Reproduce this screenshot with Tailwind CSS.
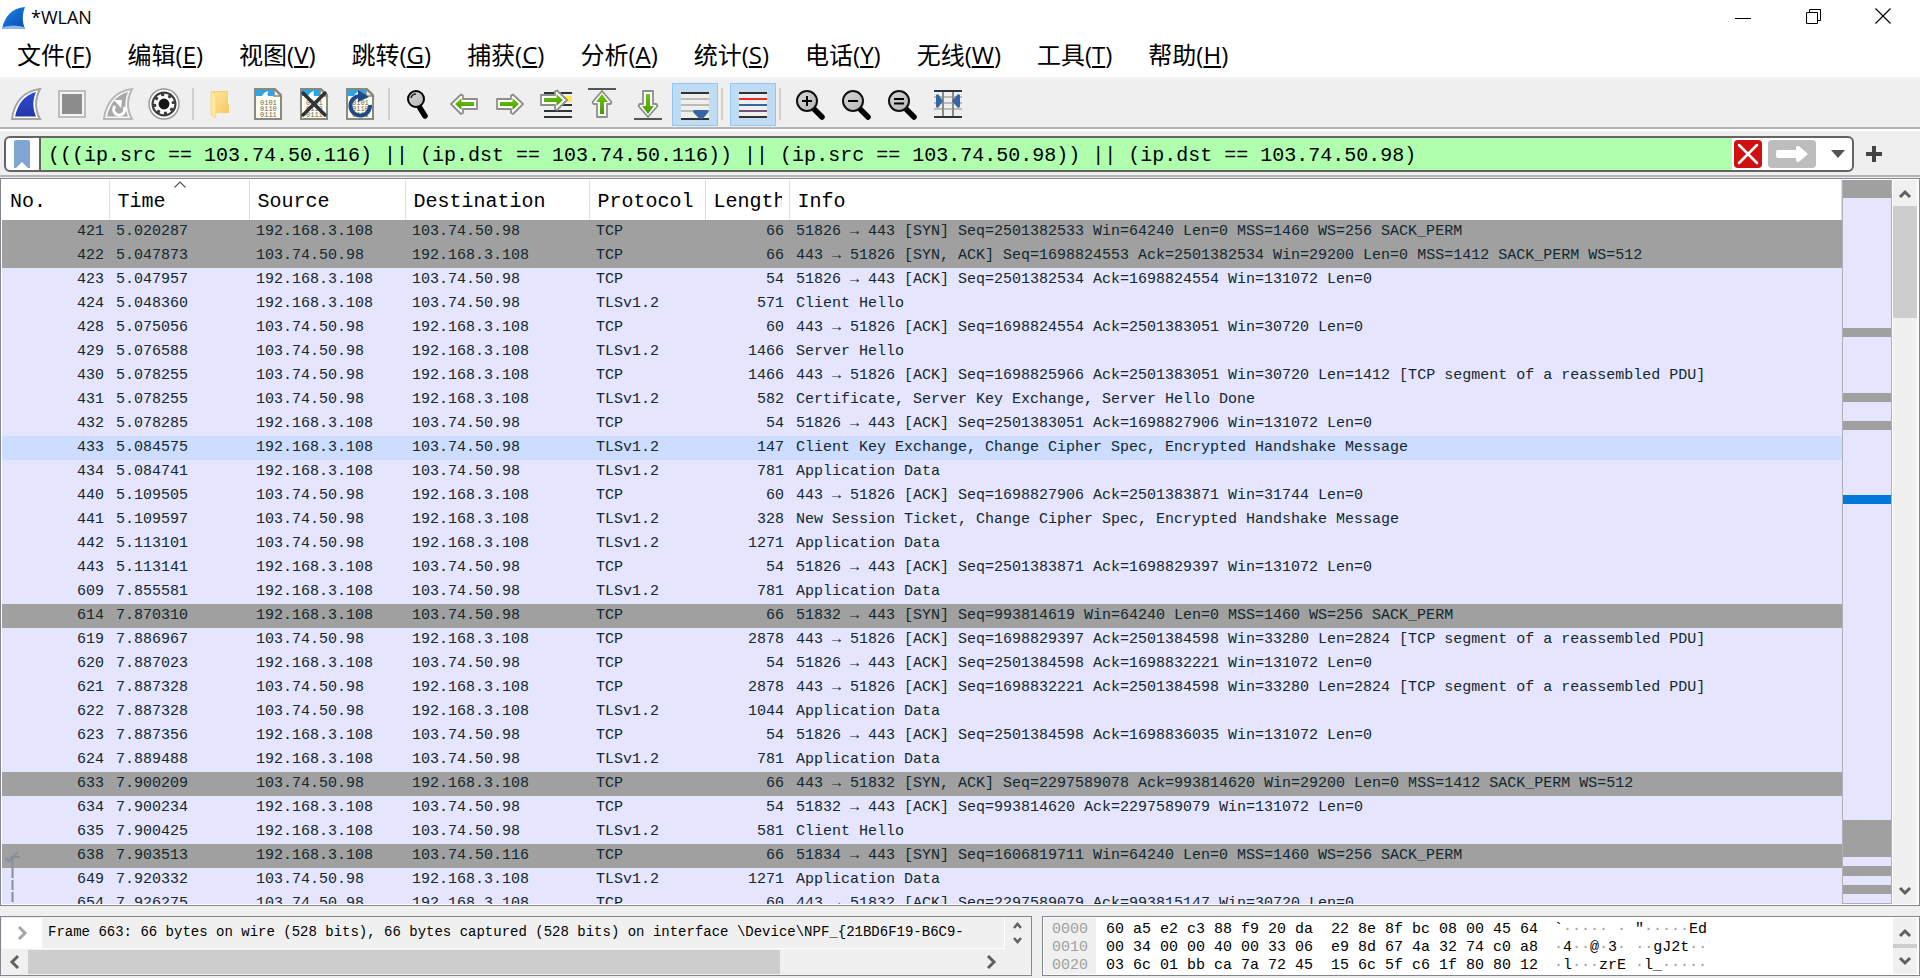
<!DOCTYPE html>
<html lang="zh-CN">
<head>
<meta charset="utf-8">
<title>*WLAN</title>
<script src="https://cdn.jsdelivr.net/npm/@tailwindcss/browser@4"></script>
</head>
<body class="flex h-screen flex-col overflow-hidden bg-[#efefef] font-['Open_Sans','Noto_Sans_CJK_SC',sans-serif] text-black">

<svg class="absolute h-0 w-0" aria-hidden="true">
  <defs>
    <linearGradient id="fin" x1="0" y1="0" x2="0" y2="1"><stop offset="0" stop-color="#2a4bd0"/><stop offset="1" stop-color="#2438a8"/></linearGradient>
    <linearGradient id="logo" x1="0" y1="0" x2="1" y2="1"><stop offset="0" stop-color="#1f8ae8"/><stop offset="1" stop-color="#0648b4"/></linearGradient>
    <linearGradient id="green" x1="0" y1="0" x2="0" y2="1"><stop offset="0" stop-color="#73c60f"/><stop offset="1" stop-color="#439a06"/></linearGradient>
    <linearGradient id="lens" x1="0" y1="0" x2="1" y2="1"><stop offset="0" stop-color="#d8d8d8"/><stop offset="1" stop-color="#b4b4b4"/></linearGradient>
    <linearGradient id="folder" x1="0" y1="0" x2="1" y2="1"><stop offset="0" stop-color="#ffe69a"/><stop offset="1" stop-color="#f2c860"/></linearGradient>
    <g id="doc">
      <path d="M3 1h20l6 6v24H3z" fill="#fffff2" stroke="#888a80" stroke-width="2"/>
      <path d="M4 2h18l6 6v0H4z" fill="#2ea5e2"/>
      <path d="M10 8q2-4 6-5q-1 3 0 5z" fill="#fff"/>
      <path d="M22 1v7h7z" fill="#f4f4ee" stroke="#888a80" stroke-width="1.5"/>
      <g font-family="Liberation Mono" font-size="7" fill="#66665f"><text x="8" y="17">0101</text><text x="8" y="23">0110</text><text x="8" y="29">0111</text></g>
    </g>
    <g id="glass">
      <path d="M20 21l8 8" stroke="#000" stroke-width="5.5" stroke-linecap="round"/>
      <circle cx="13" cy="13" r="10" fill="url(#lens)" stroke="#111" stroke-width="2"/>
    </g>
  </defs>
</svg>

<header class="flex h-[35px] shrink-0 items-center bg-white">
  <svg class="h-[35px] w-[28px]" viewBox="0 0 28 35"><path d="M2 29C5 16 12 8 25 7C22 14 22 22 25 29z" fill="url(#logo)"/><path d="M3 27Q14 24 24 27l1 2H2z" fill="#8db8e8"/></svg>
  <h1 class="pb-[2px] pl-[3px] text-[18px] leading-[32px]">*WLAN</h1>
  <div class="ml-auto flex pr-[2px]">
    <button class="flex h-[35px] w-[70px] items-center justify-center pb-[3px]" aria-label="最小化"><svg width="16" height="20" viewBox="0 0 16 20"><path d="M0 12.500h16" stroke="#000"/></svg></button>
    <button class="flex h-[35px] w-[70px] items-center justify-center pb-[3px]" aria-label="还原"><svg width="17" height="20" viewBox="0 0 17 20"><path d="M1.500 6.500h11v11h-11zM4.500 6.500v-3h11v11h-3" fill="none" stroke="#000"/></svg></button>
    <button class="flex h-[35px] w-[70px] items-center justify-center pb-[3px]" aria-label="关闭"><svg width="16" height="20" viewBox="0 0 16 20"><path d="M.5 2.500l15 15M15.500 2.500l-15 15" stroke="#000" stroke-width="1.200"/></svg></button>
  </div>
</header>

<nav class="flex h-[44px] shrink-0 items-center gap-[2px] border-b-2 border-[#f4f4f4] bg-white pb-[2px] text-[24px] leading-[40px] whitespace-nowrap">
  <button class="px-[17px]">文件(<u class="decoration-2 underline-offset-2">F</u>)</button>
  <button class="px-[17px]">编辑(<u class="decoration-2 underline-offset-2">E</u>)</button>
  <button class="px-[17px]">视图(<u class="decoration-2 underline-offset-2">V</u>)</button>
  <button class="px-[17px]">跳转(<u class="decoration-2 underline-offset-2">G</u>)</button>
  <button class="px-[17px]">捕获(<u class="decoration-2 underline-offset-2">C</u>)</button>
  <button class="px-[17px]">分析(<u class="decoration-2 underline-offset-2">A</u>)</button>
  <button class="px-[17px]">统计(<u class="decoration-2 underline-offset-2">S</u>)</button>
  <button class="px-[17px]">电话(<u class="decoration-2 underline-offset-2">Y</u>)</button>
  <button class="px-[17px]">无线(<u class="decoration-2 underline-offset-2">W</u>)</button>
  <button class="px-[17px]">工具(<u class="decoration-2 underline-offset-2">T</u>)</button>
  <button class="px-[17px]">帮助(<u class="decoration-2 underline-offset-2">H</u>)</button>
</nav>

<div role="toolbar" class="flex h-[50px] shrink-0 items-center border-b-2 border-[#b4b4b4] pt-[2px] pl-[3px]">
  <button class="flex h-[43px] w-[46px] items-center justify-center" aria-label="开始捕获"><svg width="32" height="32" viewBox="0 0 32 32"><path d="M2 31C4 14 14 3 30 1C25 11 25 22 30 31z" fill="#fff" stroke="#a5a5a5" stroke-width="2"/><path d="M5 28.500C8 15 15 7 26 4C22.500 12 22.500 20 26 28.500z" fill="url(#fin)"/></svg></button>
  <button class="flex h-[43px] w-[46px] items-center justify-center" aria-label="停止捕获"><svg width="32" height="32" viewBox="0 0 32 32"><path d="M3 3h26v26H3z" fill="#f4f4f4" stroke="#bdbdbd" stroke-width="2"/><path d="M6 6h20v20H6z" fill="#8c8c8c"/></svg></button>
  <button class="flex h-[43px] w-[46px] items-center justify-center" aria-label="重新捕获"><svg width="32" height="32" viewBox="0 0 32 32"><path d="M2 31C4 14 14 3 30 1C25 11 25 22 30 31z" fill="#f8f8f8" stroke="#b8b8b8" stroke-width="2"/><path d="M5 28.500C8 15 15 7 26 4C22.500 12 22.500 20 26 28.500z" fill="#a9a9a9"/><path d="M22 19a5.500 5.500 0 1 1-9 -1" fill="none" stroke="#fff" stroke-width="3"/><path d="M12 12h8l-1 8z" fill="#fff"/></svg></button>
  <button class="flex h-[43px] w-[46px] items-center justify-center" aria-label="捕获选项"><svg width="32" height="32" viewBox="0 0 32 32"><circle cx="16" cy="16" r="15" fill="#fff" stroke="#999" stroke-width="1.500"/><circle cx="16" cy="16" r="12.500" fill="#3a3d3f"/><circle cx="16" cy="16" r="8.800" fill="none" stroke="#fff" stroke-width="3" stroke-dasharray="4 2.900"/><circle cx="16" cy="16" r="6.700" fill="#151515" stroke="#fff" stroke-width="2.500"/></svg></button>
  <span class="flex w-[12px] justify-center"><span class="h-[32px] w-[2px] bg-[#cfcfcf]"></span></span>
  <button class="flex h-[43px] w-[46px] items-center justify-center" aria-label="打开"><svg width="32" height="32" viewBox="0 0 32 32"><path d="M7 3h15v13l1 1v8H7z" fill="#f5cf6c"/><path d="M9 4h12v12h2v9H9z" fill="url(#folder)"/><path d="M5 3l5 4v20l-1 3l-4-3z" fill="#ffe89c" stroke="#f2cc68" stroke-width=".6"/></svg></button>
  <button class="flex h-[43px] w-[46px] items-center justify-center" aria-label="保存"><svg width="32" height="32" viewBox="0 0 32 32"><use href="#doc"/></svg></button>
  <button class="flex h-[43px] w-[46px] items-center justify-center" aria-label="关闭文件"><svg width="32" height="32" viewBox="0 0 32 32"><use href="#doc"/><path d="M5 5l22 22M27 5L5 27" stroke="#2e3436" stroke-width="3.500" stroke-linecap="round"/></svg></button>
  <button class="flex h-[43px] w-[46px] items-center justify-center" aria-label="重新加载"><svg width="32" height="32" viewBox="0 0 32 32"><use href="#doc"/><path d="M26 17a9.800 9.800 0 1 1-9-9" fill="none" stroke="#204a87" stroke-width="4"/><path d="M14 2v12l11-5z" fill="#204a87"/></svg></button>
  <span class="flex w-[12px] justify-center"><span class="h-[32px] w-[2px] bg-[#cfcfcf]"></span></span>
  <button class="flex h-[43px] w-[46px] items-center justify-center" aria-label="查找"><svg width="32" height="32" viewBox="0 0 32 32"><path d="M18 20l5 8" stroke="#000" stroke-width="5.500" stroke-linecap="round"/><path d="M17 16l3 6" stroke="#000" stroke-width="2"/><circle cx="14" cy="11" r="8" fill="url(#lens)" stroke="#000" stroke-width="2"/><path d="M9 10q1-4 5-4" fill="none" stroke="#222" stroke-width="1.500"/></svg></button>
  <button class="flex h-[43px] w-[46px] items-center justify-center" aria-label="上一分组"><svg width="32" height="32" viewBox="0 0 32 32"><path d="M3 16L13 6.500l2 1V11h14v10H15v4l-2 1z" fill="#fff" stroke="#8d8f8a" stroke-width="1.800" stroke-linejoin="round"/><path d="M7 16l6.500-6v4H26v4H13.500v4z" fill="url(#green)"/></svg></button>
  <button class="flex h-[43px] w-[46px] items-center justify-center" aria-label="下一分组"><svg width="32" height="32" viewBox="0 0 32 32"><path d="M29 16L19 6.500l-2 1V11H3v10h14v4l2 1z" fill="#fff" stroke="#8d8f8a" stroke-width="1.800" stroke-linejoin="round"/><path d="M25 16l-6.500-6v4H6v4h12.500v4z" fill="url(#green)"/></svg></button>
  <button class="flex h-[43px] w-[46px] items-center justify-center" aria-label="转到分组"><svg width="32" height="32" viewBox="0 0 32 32"><path d="M4 5h28M4 23h28M4 29h28M4 17h28" stroke="#2e3436" stroke-width="2"/><path d="M22 8h10v6H22z" fill="#fce94f"/><path d="M27 12L17 2.500l-2 1V7H1v10h14v4l2 1z" fill="#fff" stroke="#8d8f8a" stroke-width="1.800" stroke-linejoin="round"/><path d="M23 12l-6.500-6v4H4v4h12.500v4z" fill="url(#green)"/></svg></button>
  <button class="flex h-[43px] w-[46px] items-center justify-center" aria-label="首个分组"><svg width="32" height="32" viewBox="0 0 32 32"><path d="M2 1h28" stroke="#555753" stroke-width="2"/><path d="M16 3l9.500 11l-1 2H21v13H11V16H7.500l-1-2z" fill="#fff" stroke="#8d8f8a" stroke-width="1.800" stroke-linejoin="round"/><path d="M16 6l6 8h-4v12h-4V14h-4z" fill="url(#green)"/></svg></button>
  <button class="flex h-[43px] w-[46px] items-center justify-center" aria-label="最后分组"><svg width="32" height="32" viewBox="0 0 32 32"><path d="M2 31h28" stroke="#555753" stroke-width="2"/><path d="M16 29l9.500-11l-1-2H21V3H11v13H7.500l-1 2z" fill="#fff" stroke="#8d8f8a" stroke-width="1.800" stroke-linejoin="round"/><path d="M16 26l6-8h-4V6h-4v12h-4z" fill="url(#green)"/></svg></button>
  <button class="ml-px flex h-[43px] w-[46px] items-center justify-center border border-[#90c8f6] bg-[#c0dcf3]" aria-label="自动滚动" aria-pressed="true"><svg width="32" height="32" viewBox="0 0 32 32"><path d="M2 5h28v26H2z" fill="#eeeeec"/><path d="M2 5h28M2 31h28" stroke="#2e3436" stroke-width="2"/><path d="M2 11h28M2 17h28M2 23h28" stroke="#babdb6" stroke-width="2"/><path d="M14 24q0-2 2-2h12q2 0 1.500 2l-5 6q-2.500 2-5 0z" fill="#3465a4"/></svg></button>
  <span class="flex w-[12px] pl-[3px]"><span class="h-[32px] w-[2px] bg-[#cfcfcf]"></span></span>
  <button class="flex h-[43px] w-[46px] items-center justify-center border border-[#90c8f6] bg-[#c0dcf3]" aria-label="着色" aria-pressed="true"><svg width="32" height="32" viewBox="0 0 32 32"><path d="M2 5h28v24H2z" fill="#eeeeec"/><path d="M2 5h28M2 29h28" stroke="#2e3436" stroke-width="2"/><path d="M2 11h28" stroke="#ef2929" stroke-width="2"/><path d="M2 17h28" stroke="#3465a4" stroke-width="2"/><path d="M2 23h28" stroke="#75507b" stroke-width="2"/></svg></button>
  <span class="flex w-[11px] pl-[3px]"><span class="h-[32px] w-[2px] bg-[#cfcfcf]"></span></span>
  <button class="flex h-[43px] w-[46px] items-center justify-center" aria-label="放大"><svg width="32" height="32" viewBox="0 0 32 32"><use href="#glass"/><path d="M8 13h10M13 8v10" stroke="#000" stroke-width="2"/></svg></button>
  <button class="flex h-[43px] w-[46px] items-center justify-center" aria-label="缩小"><svg width="32" height="32" viewBox="0 0 32 32"><use href="#glass"/><path d="M8 13h10" stroke="#000" stroke-width="2"/></svg></button>
  <button class="flex h-[43px] w-[46px] items-center justify-center" aria-label="原始大小"><svg width="32" height="32" viewBox="0 0 32 32"><use href="#glass"/><path d="M8 11h10M8 15.500h10" stroke="#000" stroke-width="2"/></svg></button>
  <button class="flex h-[43px] w-[46px] items-center justify-center" aria-label="调整列宽"><svg width="32" height="32" viewBox="0 0 32 32"><path d="M2 3h28v26H2z" fill="#eeeeec"/><path d="M2 9h28M2 15h28M2 21h28" stroke="#babdb6" stroke-width="2"/><path d="M2 3h28M2 29h28" stroke="#2e3436" stroke-width="2"/><path d="M11 4v24M21 4v24" stroke="#888a85" stroke-width="2"/><path d="M4 7l2-1l5 7l-5 7l-2-1zM28 7l-2-1l-6 7l6 7l2-1z" fill="#3465a4"/></svg></button>
</div>

<form class="flex h-[48px] shrink-0 items-center border-t-2 border-b-2 border-t-white border-b-[#b4b4b4] pt-px pl-[4px]">
  <div class="flex h-[36px] flex-1 items-center overflow-hidden rounded-[6px] border-2 border-[#646464] bg-white">
    <button type="button" class="flex h-full w-[35px] items-center justify-center border-r-2 border-[#646464] pr-px" aria-label="书签"><svg width="16" height="28" viewBox="0 0 16 28"><path d="M2 0h12q2 0 2 2v26h-2l-6-6l-6 6H0V2q0-2 2-2z" fill="#7ea5d4"/></svg></button>
    <input aria-label="显示过滤器" class="h-full min-w-0 flex-1 bg-[#afffaf] pt-[3px] pl-[7px] font-['Liberation_Mono',monospace] text-[20px] outline-none" value="(((ip.src == 103.74.50.116) || (ip.dst == 103.74.50.116)) || (ip.src == 103.74.50.98)) || (ip.dst == 103.74.50.98)">
    <button type="button" class="ml-[2px]" aria-label="清除"><svg width="28" height="28" viewBox="0 0 28 28"><rect width="28" height="28" rx="4" fill="#d01010"/><path d="M5 5l18 18M23 5L5 23" stroke="#fff" stroke-width="2.500" stroke-linecap="round"/></svg></button>
    <button type="button" class="ml-[6px]" aria-label="应用"><svg width="48" height="28" viewBox="0 0 48 28"><rect width="48" height="28" rx="4" fill="#bdbdbd"/><path d="M10 10h18V7q2-2 4 0l8 7l-8 7q-2 2-4 0v-3H10q-2 0-2-2v-4q0-2 2-2z" fill="#fff"/></svg></button>
    <button type="button" class="flex w-[36px] justify-center pl-[8px]" aria-label="历史"><svg width="14" height="8" viewBox="0 0 14 8"><path d="M0 0h14L7 8z" fill="#555"/></svg></button>
  </div>
  <button type="button" class="flex w-[66px] justify-start pl-[12px]" aria-label="添加"><svg width="16" height="16" viewBox="0 0 16 16"><path d="M8 0v16M0 8h16" stroke="#444" stroke-width="4"/></svg></button>
</form>

<main class="mt-px flex min-h-0 flex-1 border border-[#828790] bg-white p-px">
  <div class="min-w-0 flex-1 overflow-hidden">
    <table class="w-full table-fixed border-collapse font-['Liberation_Mono',monospace] text-[15px] text-[#12272e]">
      <colgroup><col class="w-[107px]"><col class="w-[140px]"><col class="w-[156px]"><col class="w-[184px]"><col class="w-[116px]"><col class="w-[84px]"><col></colgroup>
      <thead>
        <tr class="h-[40px] text-left text-[20px] text-black">
          <th class="border-r border-[#dedede] p-0 pt-[4px] pl-[8px] font-normal">No.</th>
          <th class="relative border-r border-[#dedede] p-0 pt-[4px] pl-[8px] font-normal">Time<svg class="absolute top-0 left-[64px]" width="12" height="8" viewBox="0 0 12 8"><path d="M.5 7.500L6 2l5.500 5.500" fill="none" stroke="#555" stroke-width="1.200"/></svg></th>
          <th class="border-r border-[#dedede] p-0 pt-[4px] pl-[8px] font-normal">Source</th>
          <th class="border-r border-[#dedede] p-0 pt-[4px] pl-[8px] font-normal">Destination</th>
          <th class="border-r border-[#dedede] p-0 pt-[4px] pl-[8px] font-normal">Protocol</th>
          <th class="border-r border-[#dedede] p-0 pt-[4px] pr-[7px] pl-[8px] font-normal"><div class="overflow-hidden">Length</div></th>
          <th class="border-r border-[#dedede] p-0 pt-[4px] pl-[8px] font-normal">Info</th>
        </tr>
      </thead>
      <tbody id="packets"></tbody>
    </table>
  </div>
  <div id="minimap" class="flex w-[50px] flex-col border-x border-b border-[#b0b0b4] bg-[#e5e5ff]"></div>
  <div class="mx-px flex w-[24px] flex-col items-center bg-[#f0f0f0]">
    <svg class="shrink-0" width="24" height="26" viewBox="0 0 24 26"><path d="M7 17l5-5l5 5" fill="none" stroke="#606060" stroke-width="3"/></svg>
    <div class="h-[112px] w-full bg-[#cdcdcd]"></div>
    <svg class="mt-auto shrink-0" width="24" height="26" viewBox="0 0 24 26"><path d="M7 10l5 5l5-5" fill="none" stroke="#606060" stroke-width="3"/></svg>
  </div>
</main>

<footer class="mt-[10px] mb-[2px] flex h-[60px] shrink-0 gap-[10px] font-['Liberation_Mono',monospace] text-[15px]">
  <section class="flex w-[1032px] shrink-0 flex-col border border-[#828790] bg-[#f0f0f0] p-px">
    <div class="flex h-[31px]">
      <div class="flex min-w-0 flex-1 border-r border-b border-white">
        <button class="flex w-[40px] items-center justify-center bg-white" aria-label="展开"><svg width="12" height="14" viewBox="0 0 12 14"><path d="M3 1l6 6l-6 6" fill="none" stroke="#a6a6a6" stroke-width="3"/></svg></button>
        <p class="min-w-0 flex-1 overflow-hidden pl-[6px] text-[14px] leading-[28px] whitespace-nowrap">Frame 663: 66 bytes on wire (528 bits), 66 bytes captured (528 bits) on interface \Device\NPF_{21BD6F19-B6C9-</p>
      </div>
      <svg width="25" height="31" viewBox="0 0 25 31"><path d="M9 10l3.500-4l3.500 4M9 20l3.500 4l3.500-4" fill="none" stroke="#606060" stroke-width="2.500"/></svg>
    </div>
    <div class="flex h-[25px] pt-px">
      <svg class="shrink-0" width="26" height="24" viewBox="0 0 26 24"><path d="M16 6l-6 6l6 6" fill="none" stroke="#606060" stroke-width="3"/></svg>
      <div class="h-full w-[752px] shrink-0 bg-[#cdcdcd]"></div>
      <svg class="mr-[25px] ml-auto" width="26" height="24" viewBox="0 0 26 24"><path d="M9 6l6 6l-6 6" fill="none" stroke="#606060" stroke-width="3"/></svg>
    </div>
  </section>
  <section class="flex min-w-0 flex-1 border border-[#828790] bg-white p-px leading-[18px]">
    <pre class="w-[52px] bg-[#f0f0f0] pt-[3px] pl-[8px] font-['Liberation_Mono',monospace] text-[#a0a0a0]">0000
0010
0020</pre>
    <pre class="w-[446px] pt-[3px] pl-[10px] font-['Liberation_Mono',monospace]">60 a5 e2 c3 88 f9 20 da  22 8e 8f bc 08 00 45 64
00 34 00 00 40 00 33 06  e9 8d 67 4a 32 74 c0 a8
03 6c 01 bb ca 7a 72 45  15 6c 5f c6 1f 80 80 12</pre>
    <pre class="pt-[3px] pl-[12px] font-['Liberation_Mono',monospace]">`<span class="text-[#a0a0a0]">·····</span> <span class="text-[#a0a0a0]">·</span> "<span class="text-[#a0a0a0]">·····</span>Ed
<span class="text-[#a0a0a0]">·</span>4<span class="text-[#a0a0a0]">··</span>@<span class="text-[#a0a0a0]">·</span>3<span class="text-[#a0a0a0]">·</span> <span class="text-[#a0a0a0]">··</span>gJ2t<span class="text-[#a0a0a0]">··</span>
<span class="text-[#a0a0a0]">·</span>l<span class="text-[#a0a0a0]">···</span>zrE <span class="text-[#a0a0a0]">·</span>l_<span class="text-[#a0a0a0]">·····</span></pre>
    <div class="mr-px ml-auto flex w-[24px] flex-col bg-[#f0f0f0]">
      <svg width="24" height="26" viewBox="0 0 24 26"><path d="M7 18l5-5l5 5" fill="none" stroke="#606060" stroke-width="3"/></svg>
      <div class="h-[4px] bg-[#cdcdcd]"></div>
      <svg width="24" height="26" viewBox="0 0 24 26"><path d="M7 10l5 5l5-5" fill="none" stroke="#606060" stroke-width="3"/></svg>
    </div>
  </section>
</footer>

<script>
const A = '192.168.3.108', B = '103.74.50.98';
// number, time, source, destination, protocol, length, info, row kind
const packets = [
  [421,'5.020287',A,B,'TCP',66,'51826 → 443 [SYN] Seq=2501382533 Win=64240 Len=0 MSS=1460 WS=256 SACK_PERM','syn'],
  [422,'5.047873',B,A,'TCP',66,'443 → 51826 [SYN, ACK] Seq=1698824553 Ack=2501382534 Win=29200 Len=0 MSS=1412 SACK_PERM WS=512','syn'],
  [423,'5.047957',A,B,'TCP',54,'51826 → 443 [ACK] Seq=2501382534 Ack=1698824554 Win=131072 Len=0'],
  [424,'5.048360',A,B,'TLSv1.2',571,'Client Hello'],
  [428,'5.075056',B,A,'TCP',60,'443 → 51826 [ACK] Seq=1698824554 Ack=2501383051 Win=30720 Len=0'],
  [429,'5.076588',B,A,'TLSv1.2',1466,'Server Hello'],
  [430,'5.078255',B,A,'TCP',1466,'443 → 51826 [ACK] Seq=1698825966 Ack=2501383051 Win=30720 Len=1412 [TCP segment of a reassembled PDU]'],
  [431,'5.078255',B,A,'TLSv1.2',582,'Certificate, Server Key Exchange, Server Hello Done'],
  [432,'5.078285',A,B,'TCP',54,'51826 → 443 [ACK] Seq=2501383051 Ack=1698827906 Win=131072 Len=0'],
  [433,'5.084575',A,B,'TLSv1.2',147,'Client Key Exchange, Change Cipher Spec, Encrypted Handshake Message','hover'],
  [434,'5.084741',A,B,'TLSv1.2',781,'Application Data'],
  [440,'5.109505',B,A,'TCP',60,'443 → 51826 [ACK] Seq=1698827906 Ack=2501383871 Win=31744 Len=0'],
  [441,'5.109597',B,A,'TLSv1.2',328,'New Session Ticket, Change Cipher Spec, Encrypted Handshake Message'],
  [442,'5.113101',B,A,'TLSv1.2',1271,'Application Data'],
  [443,'5.113141',A,B,'TCP',54,'51826 → 443 [ACK] Seq=2501383871 Ack=1698829397 Win=131072 Len=0'],
  [609,'7.855581',A,B,'TLSv1.2',781,'Application Data'],
  [614,'7.870310',A,B,'TCP',66,'51832 → 443 [SYN] Seq=993814619 Win=64240 Len=0 MSS=1460 WS=256 SACK_PERM','syn'],
  [619,'7.886967',B,A,'TCP',2878,'443 → 51826 [ACK] Seq=1698829397 Ack=2501384598 Win=33280 Len=2824 [TCP segment of a reassembled PDU]'],
  [620,'7.887023',A,B,'TCP',54,'51826 → 443 [ACK] Seq=2501384598 Ack=1698832221 Win=131072 Len=0'],
  [621,'7.887328',B,A,'TCP',2878,'443 → 51826 [ACK] Seq=1698832221 Ack=2501384598 Win=33280 Len=2824 [TCP segment of a reassembled PDU]'],
  [622,'7.887328',B,A,'TLSv1.2',1044,'Application Data'],
  [623,'7.887356',A,B,'TCP',54,'51826 → 443 [ACK] Seq=2501384598 Ack=1698836035 Win=131072 Len=0'],
  [624,'7.889488',A,B,'TLSv1.2',781,'Application Data'],
  [633,'7.900209',B,A,'TCP',66,'443 → 51832 [SYN, ACK] Seq=2297589078 Ack=993814620 Win=29200 Len=0 MSS=1412 SACK_PERM WS=512','syn'],
  [634,'7.900234',A,B,'TCP',54,'51832 → 443 [ACK] Seq=993814620 Ack=2297589079 Win=131072 Len=0'],
  [635,'7.900425',A,B,'TLSv1.2',581,'Client Hello'],
  [638,'7.903513',A,'103.74.50.116','TCP',66,'51834 → 443 [SYN] Seq=1606819711 Win=64240 Len=0 MSS=1460 WS=256 SACK_PERM','syn'],
  [649,'7.920332',B,A,'TLSv1.2',1271,'Application Data'],
  [654,'7.926275',B,A,'TCP',60,'443 → 51832 [ACK] Seq=2297589079 Ack=993815147 Win=30720 Len=0'],
];
const rowClass = { syn: 'h-[24px] bg-[#a0a0a0]', hover: 'h-[24px] bg-[#cdddff]', data: 'h-[24px] bg-[#e5e5ff]' };
const related = '<svg class="absolute top-0 left-0" width="24" height="60" viewBox="0 0 24 60"><path d="M10.500 13v21M10.500 36v10M10.500 48v10" stroke="#87909a" stroke-width="2"/><path d="M18 13H8M16 8l-7 7M4 14l3 3l4-4" fill="none" stroke="#87909a" stroke-width="2"/></svg>';
const arrow = '<span class="font-[\'DejaVu_Sans_Mono\',monospace] leading-none">→</span>';
document.getElementById('packets').innerHTML = packets.map(p =>
  `<tr class="${rowClass[p[7] || 'data']}">` + p.slice(0, 7).map((v, i) =>
    i === 0 || i === 5
      ? `<td class="relative p-0 pr-[5px] pb-px text-right leading-[23px] whitespace-nowrap">${v === 638 ? related : ''}${v}</td>`
      : `<td class="p-0 pb-px pl-[7px] leading-[23px] whitespace-nowrap">${String(v).replace('→', arrow)}</td>`).join('') + '</tr>').join('');

// minimap bands: [gap before, height, kind]
const bands = [[0,18,'syn'],[130,9,'syn'],[56,9,'syn'],[19,9,'syn'],[65,9,'sel'],[316,37,'syn'],[9,10,'syn'],[9,9,'syn']];
const bandClass = { syn: 'w-full shrink-0 bg-[#a0a0a0]', sel: 'w-full shrink-0 bg-[#0078d7]' };
document.getElementById('minimap').innerHTML = bands.map(([gap, h, k]) =>
  `<div class="${bandClass[k]}" style="margin-top:${gap}px;height:${h}px"></div>`).join('');
</script>
</body>
</html>
